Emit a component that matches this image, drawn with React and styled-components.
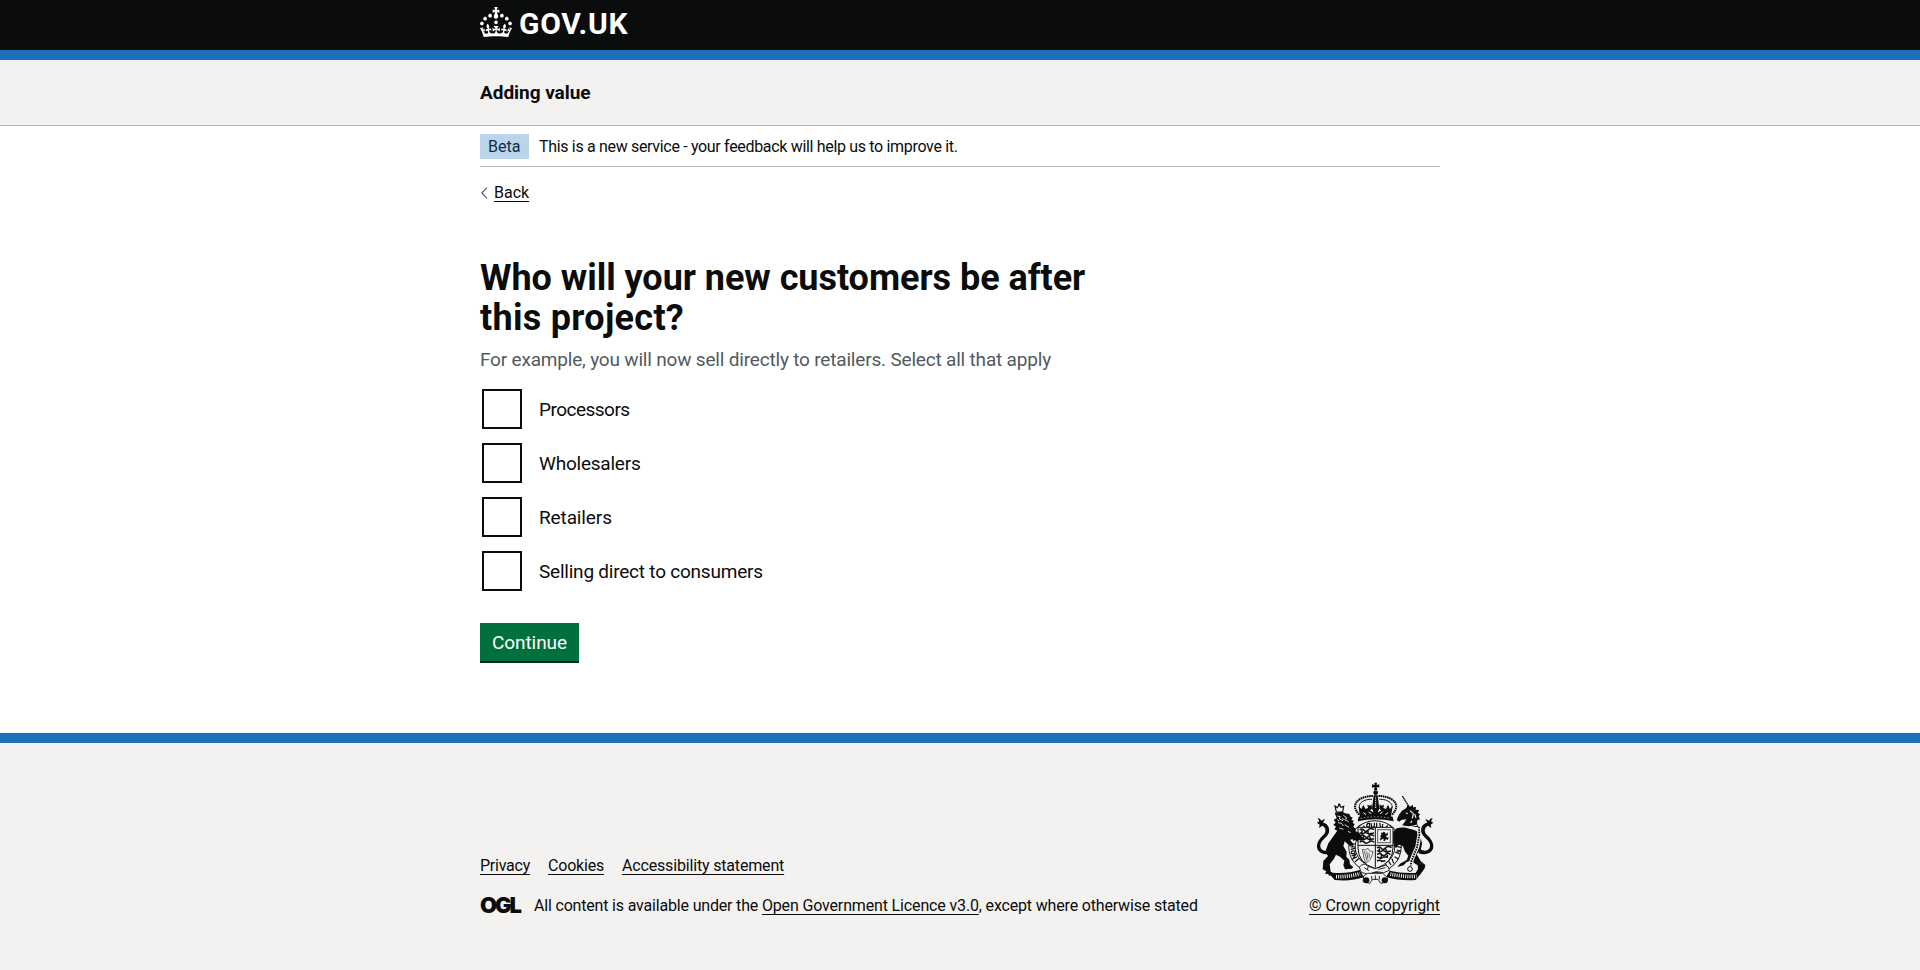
import React from "react";
import styled, { createGlobalStyle } from "styled-components";

const ink = "#0b0c0c";
const blue = "#1d70b8";
const grey = "#f3f2f1";
const rule = "#b1b4b6";

const GlobalStyle = createGlobalStyle`
  *, *::before, *::after { box-sizing: border-box; }
  body {
    margin: 0;
    background: #fff;
    color: ${ink};
    font-family: Roboto, "Liberation Sans", Arial, sans-serif;
    -webkit-font-smoothing: antialiased;
  }
`;

const Page = styled.div`
  display: flex;
  flex-direction: column;
  min-height: 970px;
`;

const Container = styled.div`
  width: 960px;
  margin: 0 auto;
`;

const Header = styled.header`
  height: 60px;
  background: ${ink};
  border-bottom: 10px solid ${blue};
`;

const LogoLink = styled.a`
  display: flex;
  align-items: flex-start;
  gap: 7px;
  padding-top: 7px;
  color: #fff;
  text-decoration: none;
`;

const Wordmark = styled.span`
  font-size: 30px;
  font-weight: 700;
  line-height: 34px;
  letter-spacing: 0.75px;
`;

const ServiceBar = styled.div`
  height: 66px;
  background: ${grey};
  border-bottom: 1px solid ${rule};
`;

const ServiceName = styled.div`
  padding-top: 20px;
  font-size: 19px;
  font-weight: 700;
  line-height: 25px;
  letter-spacing: -0.04px;
`;

const PhaseBanner = styled.div`
  display: flex;
  align-items: center;
  gap: 10px;
  height: 41px;
  padding: 8px 0 7px;
  border-bottom: 1px solid ${rule};
`;

const Tag = styled.strong`
  width: 49px;
  height: 25px;
  padding-left: 8px;
  background: #bbd4ea;
  color: #0c2d4a;
  font-size: 16px;
  font-weight: 400;
  line-height: 25px;
`;

const Text = styled.span`
  font-size: 16px;
  line-height: 20px;
  white-space: pre;
  letter-spacing: ${(p) => p.$tracking || 0}px;
`;

const TextLink = styled.a`
  color: ${ink};
  font-size: 16px;
  line-height: 20px;
  letter-spacing: ${(p) => p.$tracking || 0}px;
  text-decoration: underline;
  text-decoration-thickness: 1px;
  text-underline-offset: 2.6px;
`;

const BackRow = styled.div`
  display: flex;
  align-items: center;
  gap: 6px;
  margin-top: 16px;
  height: 20px;
`;

const Main = styled.main`
  width: 630px;
  padding-top: 55px;
  height: 530px;
`;

const Heading = styled.h1`
  margin: 0;
  font-size: 36px;
  font-weight: 700;
  line-height: 40px;
`;

const HeadingLine = styled.span`
  display: block;
  letter-spacing: ${(p) => p.$tracking}px;
`;

const Hint = styled.p`
  margin: 9px 0 15px;
  color: #505a5f;
  font-size: 19px;
  line-height: 25px;
  letter-spacing: -0.185px;
  white-space: nowrap;
`;

const Options = styled.div`
  display: flex;
  flex-direction: column;
  gap: 10px;
`;

const Option = styled.label`
  display: flex;
  align-items: center;
  height: 44px;
  padding-left: 2px;
`;

const Box = styled.input`
  appearance: none;
  width: 40px;
  height: 40px;
  margin: 0 17px 0 0;
  border: 2px solid ${ink};
  background: #fff;
`;

const OptionText = styled.span`
  font-size: 19px;
  line-height: 25px;
  letter-spacing: ${(p) => p.$tracking}px;
`;

const Button = styled.button`
  display: block;
  width: 99px;
  height: 38px;
  margin-top: 30px;
  padding: 1px 0 0;
  border: 0;
  background: #00703c;
  box-shadow: 0 2px 0 #002d18;
  color: #fff;
  font-family: inherit;
  font-size: 19px;
  line-height: 38px;
  letter-spacing: -0.08px;
`;

const Footer = styled.footer`
  flex: 1;
  background: ${grey};
  border-top: 10px solid ${blue};
`;

const FooterInner = styled(Container)`
  display: flex;
  justify-content: space-between;
  align-items: flex-end;
  height: 173px;
`;

const FooterMeta = styled.div`
  display: flex;
  flex-direction: column;
  gap: 20px;
`;

const FooterLinks = styled.nav`
  display: flex;
  gap: 18px;
`;

const Licence = styled.div`
  display: flex;
  align-items: flex-end;
`;

const OglMark = styled.span`
  width: 54px;
  padding-bottom: 2px;
  font-family: Inter, Roboto, sans-serif;
  font-size: 22px;
  font-weight: 900;
  line-height: 18px;
  letter-spacing: -2.1px;
`;

const Copyright = styled.div`
  display: flex;
  flex-direction: column;
  align-items: center;
  gap: 10px;
`;

const CrownIcon = () => (
  <svg width="32" height="30" viewBox="0 0 32 30" fill="currentColor" aria-hidden="true">
    <path d="M22.6 10.4c-1 .4-2-.1-2.4-1-.4-.9.1-2 1-2.4.9-.4 2 .1 2.4 1s-.1 2-1 2.4m-5.9 6.7c-.9.4-2-.1-2.4-1-.4-.9.1-2 1-2.4.9-.4 2 .1 2.4 1s-.1 2-1 2.4m10.8-3.7c-1 .4-2-.1-2.4-1-.4-.9.1-2 1-2.4.9-.4 2 .1 2.4 1s0 2-1 2.4m3.3 4.8c-1 .4-2-.1-2.4-1-.4-.9.1-2 1-2.4.9-.4 2 .1 2.4 1s-.1 2-1 2.4M17 4.7l2.3 1.2V2.5l-2.3.7-.2-.2.9-3h-3.4l.9 3-.2.2c-.1.1-2.3-.7-2.3-.7v3.4L15 4.7c.1.1.1.2.2.2l-1.3 4c-.1.2-.1.4-.1.6 0 1.1.8 2 1.9 2.2h.7c1-.2 1.9-1.1 1.9-2.1 0-.2 0-.4-.1-.6l-1.3-4c-.1-.2 0-.2.1-.3m-7.6 5.7c.9.4 2-.1 2.4-1 .4-.9-.1-2-1-2.4-.9-.4-2 .1-2.4 1s0 2 1 2.4m-5 3c.9.4 2-.1 2.4-1 .4-.9-.1-2-1-2.4-.9-.4-2 .1-2.4 1s.1 2 1 2.4m-3.2 4.8c.9.4 2-.1 2.4-1 .4-.9-.1-2-1-2.4-.9-.4-2 .1-2.4 1s0 2 1 2.4m14.8 11c4.4 0 8.6.3 12.3.8 1.1-4.5 2.4-7 3.7-8.8l-2.5-.9c.2 1.3.3 1.9 0 2.7-.4-.4-.8-1.1-1.1-2.3l-1.2 4c.7-.5 1.3-.8 2-.9-1.1 2.5-2.6 3.1-3.5 3-1.1-.2-1.7-1.2-1.5-2.1.3-1.2 1.5-1.5 2.1-.1 1.1-2.3-.8-3-2-2.3 1.9-1.9 2.1-3.5.6-5.6-2.1 1.6-2.1 3.2-1.2 5.5-1.2-1.4-3.2-.6-2.5 1.6.9-1.4 2.1-.5 1.9.8-.2 1.1-1.7 2.1-3.5 1.9-2.7-.2-2.9-2.1-2.9-3.6.7-.1 1.9.5 2.9 1.9l.4-4.3c-1.1 1.1-2.1 1.4-3.2 1.4.4-1.2 2.1-3 2.1-3h-5.4s1.7 1.9 2.1 3c-1.1 0-2.1-.2-3.2-1.4l.4 4.3c1-1.4 2.2-2 2.9-1.9-.1 1.5-.2 3.4-2.9 3.6-1.9.2-3.4-.8-3.5-1.9-.2-1.3 1-2.2 1.9-.8.7-2.3-1.2-3-2.5-1.6.9-2.2.9-3.9-1.2-5.5-1.5 2-1.3 3.7.6 5.6-1.2-.7-3.1 0-2 2.3.6-1.4 1.8-1.1 2.1.1.2.9-.3 1.9-1.5 2.1-.9.2-2.4-.5-3.5-3 .6 0 1.2.3 2 .9l-1.2-4c-.3 1.1-.7 1.9-1.1 2.3-.3-.8-.2-1.4 0-2.7l-2.9.9C1.3 23 2.6 25.5 3.7 30c3.7-.5 7.9-.8 12.3-.8" />
  </svg>
);

const Chevron = () => (
  <svg width="8" height="12" viewBox="0 0 8 12" fill="none" stroke="#505a5f" strokeWidth="1.1" aria-hidden="true">
    <path d="M7 0.6 L1.8 6 L7 11.4" />
  </svg>
);

const TAIL =
  "M360 238C378 248 392 238 390 224C386 208 368 202 364 187C361 170 370 160 382 158L376 146L387 152Q390 144 398 144L393 154L400 158L392 164L394 174L384 167C373 173 372 184 379 193C391 204 404 220 399 236C393 252 370 256 356 250Z";

const RoyalArms = () => (
  <svg width="125" height="104" viewBox="36 36 375 312" fill={ink} stroke="none" aria-hidden="true">
    {/* imperial crown */}
    <path d="M223 38h8l-1 7 8-2v10l-8-2 2 9h-10l2-9-8 2V43l8 2z" />
    <circle cx="227" cy="68" r="7" />
    <path d="M221 76h12l5 40-6 12h-10l-6-12z" />
    <path d="M227 82v32" stroke={grey} strokeWidth="3" strokeDasharray="4 3" />
    <g fill="none" stroke={ink}>
      <path d="M178 134C143 98 187 77 220 78M276 134C311 98 267 77 234 78" strokeWidth="6" strokeDasharray="5 1.5" />
      <path d="M187 126C162 103 193 86 216 88M267 126C292 103 261 86 238 88" strokeWidth="3" />
    </g>
    <path d="M176 109l8 8 6-13 6 13 8-3-2-10 8 3 5-4 1 13-6 5 9 6 8-12 8 12 9-6-6-5 1-13 6 4 7-3-2 10 8 3 6-13 6 13 8-8-6 36q-44-12-92 0z" />
    <path d="M176 140q51-12 102 0l3 14q-54-13-108 0z" />
    <path d="M190 128l8 6M206 126l8 5M240 131l8-5M256 134l8-6" stroke={grey} strokeWidth="3" />
    <path d="M182 145q45-9 90 0" fill="none" stroke={grey} strokeWidth="2" strokeDasharray="4 6" />

    {/* garter with its motto */}
    <ellipse cx="225" cy="230" rx="69" ry="68" fill="none" stroke={ink} strokeWidth="22" />
    <ellipse cx="225" cy="230" rx="69" ry="68" fill="none" stroke={grey} strokeWidth="17" />
    <g fill="none" stroke={ink} strokeWidth="3.6">
      <path d="M152 222h14M152 231h13M158 222v9M152 238l13-3M153 250q12 4 13-6-12-4-13 6M155 258l12-5-8 13 12-6M165 275l11-9M178 174l10 8M190 167l7 10" />
      <path d="M203 160q-6 8 0 13 8-3 5-13zM213 159l2 11q6 4 8-1v-11M230 158v13M239 159l3 13M248 162l-1 12M263 166l-8 11M271 172l-6 12" />
      <path d="M283 188l12-7M289 200l13-4M288 206l15 1M291 216l13-2-11 9 13-1M292 230l13 2M290 240l13 3-15 4 12 5M284 260l12 8M276 266l5 14M266 274l7 11M257 281l4 12" />
    </g>

    {/* quartered shield */}
    <path d="M174 172h105v62q0 45-53 62-52-17-52-62z" fill={grey} stroke={ink} strokeWidth="3" />
    <path d="M226 172v121M174 226h105" stroke={ink} strokeWidth="3" />
    <g fill="none" stroke={ink} strokeWidth="4.4">
      <path d="M179 180q8-6 13 1t12-1 18-1M179 188l9 4 8-5 10 5 16-3M179 198q9-6 15 1t13-1 15 1M179 206l12 3 9-4 8 4 14-3M179 216q9-5 14 1t14-1 15 1M186 180v10M204 181v8M190 199v9M210 200v7" />
      <path d="M231 234q8-6 13 1t12-1 19-1M231 242l9 4 8-5 10 5 15-3M231 253q9-5 15 1t12-1 13 1M231 261l12 4 9-5 12 2M231 273q9-5 14 1l11-2M238 235v9M258 236v8M244 254v9M262 254v8" />
    </g>
    <rect x="233" y="179" width="38" height="39" fill="none" stroke="#505a5f" strokeWidth="3" />
    <path d="M243 187l5 3 1-5 6 2 2 6 6-6 1 7-6 4 3 5 5-1-2 7-7-1-2 5-5-1 1-6-5 1-4 5-3-6 5-3-4-4 4-4z" />
    <path d="M187 238q4 27 10 40 17-4 22-33-13 0-15-10-8 8-17 3zM193 243l8 29M200 244l4 24M207 248l1 15" fill="none" stroke="#505a5f" strokeWidth="2.8" />

    {/* lion */}
    <path d="M105 108l7 5 5-9 6 8 8-3-3 17h-19z" fill={grey} stroke={ink} strokeWidth="3.5" />
    <circle cx="118" cy="104" r="3.5" />
    <path d="M104 128l23-3 8 5 13 2 4 8 6 3-4 6 7 3-3 6 6 5-4 7 8 7-2 6 12 6 6 9 8 8-7 1-1 7-7-5-5 6-7-5-4 4-3-6-8 1 6 8 6 6-5 2-5 5-9-8-9-8-4 14 10 17-1 15 9 9 2 14 10 9-5 4-20 2-5-12 3-14-13-12-12-6-7 14-12 15 3 22 8 5 11 2 6 7-20 1-4-5-6 3-2-6-10-1 4-7-11-6 2-25 14-15-8-13 9-25 15-21 12-17-9-4 5-8-8-6 7-6-6-9 9-4z" />
    <path d="M112 138l9 2-3 7 11 5M130 136l11 8-7 5 12 6M114 158l11 2 5 8M134 164l13 8M118 174l12 4M144 184l8 4M112 148l5 5M128 144l2 6" fill="none" stroke={grey} strokeWidth="2.6" />
    <path d={TAIL} transform="translate(451 0) scale(-1 1)" />

    {/* unicorn */}
    <path d="M307 78l20 32" stroke={ink} strokeWidth="4" strokeDasharray="5 1" />
    <path d="M323 104l7 6 9-6 0 8 9-1-1 8 10 1-3 8 6 5-4 6 4 9-8 3-1 8 4 12-30 0-21-3 8-9 7-11-15 2-6 5-8-5 7-16 9-12 13-8z" />
    <path d="M304 166q20 9 48-1M302 174q22 7 44 0" fill="none" stroke={grey} strokeWidth="3.5" />
    <path d="M330 122l10 9-3 14M344 132l4 12M336 152l-4 7M318 128l5 3" fill="none" stroke={grey} strokeWidth="3.5" />
    <path d="M279 186l11-11q20-6 38 1 20 3 32 14l6 32-4 19-12 12 12 20 14 12-2 10-7 10-13 9-11 2 11-19-1-11-22-14-12 5-8 9-19 5 8-10 20-11 5-13-10-12-6-16-12-6-8 11-7-5-2-11z" />
    <path d="M357 172l1 24-6 34-17 40-3 18" fill="none" stroke={grey} strokeWidth="12" />
    <path d="M357 170l1 24-7 38-17 42-2 14" fill="none" stroke={ink} strokeWidth="5.5" strokeDasharray="5 2.5" />
    <circle cx="330" cy="297" r="7" fill={grey} stroke={ink} strokeWidth="3" />
    <path d={TAIL} />

    {/* ribbons and scrollwork */}
    <g fill={grey} stroke={ink} strokeWidth="2.6">
      <path d="M178 291q14-15 24-3l23 8 31-10q12 2 12 15l-17 7-22-3-25 8-20-6z" />
      <path d="M203 310h45l15 13-2 13-19 4-8-12h-16l-9 12-20-5 2-17z" />
    </g>
    <path d="M84 307l13 1q45 4 82-8l13 22q-39 13-88 8z" />
    <path d="M366 307l-13 1q-44 4-84-6l-10 19q39 12 88 9z" />
    <path d="M108 320q36 1 72-9" fill="none" stroke={grey} strokeWidth="11" strokeDasharray="3 3.5" />
    <path d="M271 312q36 9 79 7" fill="none" stroke={grey} strokeWidth="11" strokeDasharray="3 3.5" />
    <circle cx="199" cy="331" r="9" />
    <circle cx="254" cy="331" r="9" />
    <path d="M193 293l14 9M205 290l-4 10M234 298l22-5M215 318v11M226 316v14M238 318v11" fill="none" stroke={ink} strokeWidth="2.6" />
  </svg>
);

const OPTIONS = [
  { label: "Processors", tracking: -0.52 },
  { label: "Wholesalers", tracking: -0.22 },
  { label: "Retailers", tracking: -0.12 },
  { label: "Selling direct to consumers", tracking: -0.22 },
];

const FOOTER_LINKS = [
  { label: "Privacy", tracking: -0.24 },
  { label: "Cookies", tracking: -0.2 },
  { label: "Accessibility statement", tracking: -0.17 },
];

export default function App() {
  return (
    <Page>
      <GlobalStyle />
      <Header>
        <Container>
          <LogoLink>
            <CrownIcon />
            <Wordmark>GOV.UK</Wordmark>
          </LogoLink>
        </Container>
      </Header>
      <ServiceBar>
        <Container>
          <ServiceName>Adding value</ServiceName>
        </Container>
      </ServiceBar>
      <Container>
        <PhaseBanner>
          <Tag>Beta</Tag>
          <Text $tracking={-0.325}>This is a new service - your feedback will help us to improve it.</Text>
        </PhaseBanner>
        <BackRow>
          <Chevron />
          <TextLink>Back</TextLink>
        </BackRow>
        <Main>
          <Heading>
            <HeadingLine $tracking={-0.04}>Who will your new customers be after</HeadingLine>
            <HeadingLine $tracking={0.3}>this project?</HeadingLine>
          </Heading>
          <Hint>For example, you will now sell directly to retailers. Select all that apply</Hint>
          <Options>
            {OPTIONS.map((o) => (
              <Option key={o.label}>
                <Box type="checkbox" />
                <OptionText $tracking={o.tracking}>{o.label}</OptionText>
              </Option>
            ))}
          </Options>
          <Button>Continue</Button>
        </Main>
      </Container>
      <Footer>
        <FooterInner>
          <FooterMeta>
            <FooterLinks>
              {FOOTER_LINKS.map((l) => (
                <TextLink key={l.label} $tracking={l.tracking}>{l.label}</TextLink>
              ))}
            </FooterLinks>
            <Licence>
              <OglMark>OGL</OglMark>
              <Text $tracking={-0.18}>All content is available under the </Text>
              <TextLink $tracking={-0.15}>Open Government Licence v3.0</TextLink>
              <Text $tracking={-0.17}>, except where otherwise stated</Text>
            </Licence>
          </FooterMeta>
          <Copyright>
            <RoyalArms />
            <TextLink $tracking={-0.09}>© Crown copyright</TextLink>
          </Copyright>
        </FooterInner>
      </Footer>
    </Page>
  );
}
